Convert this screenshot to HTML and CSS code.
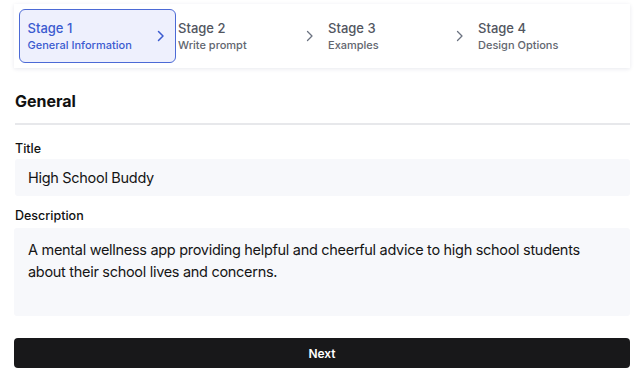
FILE: index.html
```html
<!DOCTYPE html>
<html lang="en">
<head>
  <meta charset="UTF-8" />
  <meta name="viewport" content="width=device-width, initial-scale=1.0"/>
  <title>New Bot | General</title>
  <link rel="stylesheet" href="styles.css">
</head>
<body>
<!-- Stepper -->
  <div class="stepper">
    <div class="step active">
      <div class="step-text">
        <span class="step-title">Stage 1</span>
        <span class="step-sub">General Information</span>
      </div>
      <svg class="chevron" width="8" height="12" viewBox="0 0 8 12"><path d="M1.5 1.5 L6 6 L1.5 10.5" fill="none" stroke="currentColor" stroke-width="1.5" stroke-linecap="round" stroke-linejoin="round"/></svg>
    </div>
    <div class="step">
      <div class="step-text">
        <span class="step-title">Stage 2</span>
        <span class="step-sub">Write prompt</span>
      </div>
      <svg class="chevron" width="8" height="12" viewBox="0 0 8 12"><path d="M1.5 1.5 L6 6 L1.5 10.5" fill="none" stroke="currentColor" stroke-width="1.3" stroke-linecap="round" stroke-linejoin="round"/></svg>
    </div>
    <div class="step">
      <div class="step-text">
        <span class="step-title">Stage 3</span>
        <span class="step-sub">Examples</span>
      </div>
      <svg class="chevron" width="8" height="12" viewBox="0 0 8 12"><path d="M1.5 1.5 L6 6 L1.5 10.5" fill="none" stroke="currentColor" stroke-width="1.3" stroke-linecap="round" stroke-linejoin="round"/></svg>
    </div>
    <div class="step last">
      <div class="step-text">
        <span class="step-title">Stage 4</span>
        <span class="step-sub">Design Options</span>
      </div>
    </div>
  </div>

  <h2 class="section-title">General</h2>

  <form class="form">
    <label for="title">Title</label>
    <input id="title" type="text" value="High School Buddy">

    <label for="description">Description</label>
    <textarea id="description">A mental wellness app providing helpful and cheerful advice to high school students about their school lives and concerns.</textarea>

    <button type="button" class="next-btn">Next</button>
  </form>
</body>
</html>
```

FILE: styles.css
```css
body {
  font-family: Inter, 'Noto Sans', sans-serif;
  margin: 0;
  padding: 4px 10px 0 14px;
  background-color: #fff;
  color: #111;
}

/* Stepper */
.stepper {
  display: flex;
  align-items: stretch;
  padding: 5px;
  background: #fff;
  box-shadow: 0 1px 4px rgba(30, 40, 90, 0.10);
}

.step {
  box-sizing: border-box;
  width: 150px;
  height: 54px;
  display: flex;
  align-items: center;
  justify-content: space-between;
  padding: 0 5px 0 9px;
  color: #6b7280;
}

.step.active {
  width: 157px;
  margin-right: -7px;
  padding: 0 10px 0 7.5px;
  border: 1.5px solid #4c6ad6;
  border-radius: 6px;
  background-color: #eef0fd;
  color: #3b5bd0;
}

.step-text {
  display: flex;
  flex-direction: column;
}

.step-title {
  font-size: 13px;
  line-height: 18px;
  font-weight: 500;
  color: #52565f;
}

.step-sub {
  font-size: 11px;
  line-height: 16px;
  font-weight: 500;
  color: #62666f;
}

.step.active .step-title,
.step.active .step-sub {
  color: #3b5bd0;
}

.chevron {
  display: block;
}

/* Form */
.section-title {
  margin: 21px 0 0 1px;
  padding-bottom: 10px;
  font-size: 16px;
  line-height: 24px;
  font-weight: 700;
  border-bottom: 2px solid #e7e8eb;
}

.form {
  display: flex;
  flex-direction: column;
  padding-top: 15px;
}

.form label {
  margin-left: 1px;
  font-size: 12.5px;
  line-height: 18px;
  font-weight: 500;
  color: #111;
}

.form input,
.form textarea {
  box-sizing: border-box;
  border: none;
  outline: none;
  background-color: #f7f8fb;
  font-family: inherit;
  font-size: 14.5px;
  letter-spacing: -0.3px;
  color: #151515;
  border-radius: 3px;
}

.form input {
  height: 37px;
  margin: 1px 0 11px 1px;
  padding: 0 13px;
}

.form textarea {
  height: 88px;
  margin-top: 3px;
  padding: 11px 14px 9px;
  line-height: 22px;
  resize: none;
}

.next-btn {
  height: 30px;
  margin-top: 22px;
  border: none;
  border-radius: 4px;
  background-color: #18181a;
  color: #fff;
  font-family: inherit;
  font-size: 12px;
  font-weight: 600;
  cursor: pointer;
}
```
